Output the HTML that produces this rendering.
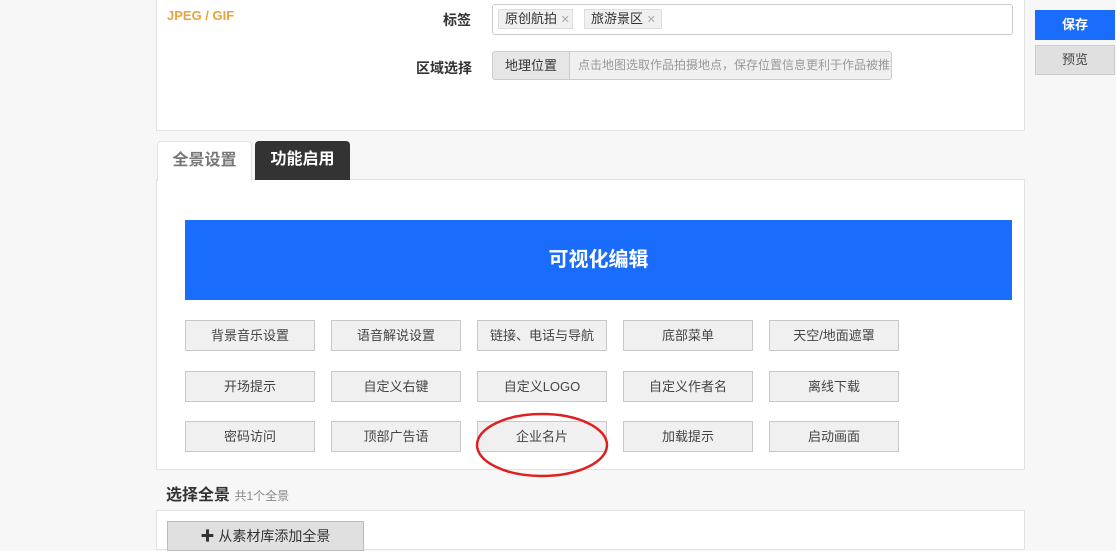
<!DOCTYPE html>
<html><head><meta charset="utf-8"><style>
*{box-sizing:border-box;margin:0;padding:0}
body{width:1116px;height:539px;overflow:hidden;background:#f7f7f7;font-family:"Liberation Sans","Noto Sans CJK SC",sans-serif;position:relative;color:#333}
.abs{position:absolute}
.panel{background:#fff;border:1px solid #e2e2e2}
.btn{position:absolute;width:130px;height:31px;background:#f0f0f0;border:1px solid #c8c8c8;font-size:13px;text-align:center;line-height:29px;color:#444}
</style></head><body>
<div class="abs panel" style="left:156px;top:-2px;width:869px;height:133px"></div>
<div class="abs" style="left:167px;top:8px;color:#e8a33c;font-weight:bold;font-size:13px">JPEG / GIF</div>
<div class="abs" style="left:443px;top:10px;font-size:14px;font-weight:bold">标签</div>
<div class="abs" style="left:492px;top:4px;width:521px;height:31px;border:1px solid #ccc;border-radius:3px;background:#fff"></div>
<div class="abs" style="left:498px;top:9px;width:75px;height:20px;background:#f0f0f0;border:1px solid #ddd;font-size:13px;line-height:18px;padding-left:6px">原创航拍 <span style="color:#aaa;font-size:11px">✕</span></div>
<div class="abs" style="left:584px;top:9px;width:78px;height:20px;background:#f0f0f0;border:1px solid #ddd;font-size:13px;line-height:18px;padding-left:6px">旅游景区 <span style="color:#aaa;font-size:11px">✕</span></div>
<div class="abs" style="left:416px;top:58px;font-size:14px;font-weight:bold">区域选择</div>
<div class="abs" style="left:492px;top:51px;width:400px;height:29px;border:1px solid #ccc;border-radius:3px;background:#f0f0f0;overflow:hidden;white-space:nowrap">
<span style="display:inline-block;width:77px;height:27px;background:#e6e6e6;border-right:1px solid #ccc;text-align:center;line-height:27px;font-size:13px;vertical-align:top">地理位置</span><span style="font-size:12px;color:#999;line-height:27px;padding-left:8px">点击地图选取作品拍摄地点，保存位置信息更利于作品被推荐</span></div>
<div class="abs" style="left:1035px;top:10px;width:80px;height:30px;background:#1a6dfc;color:#fff;font-size:13px;font-weight:bold;text-align:center;line-height:30px">保存</div>
<div class="abs" style="left:1035px;top:45px;width:80px;height:30px;background:#e0e0e0;border:1px solid #ccc;font-size:13px;text-align:center;line-height:28px;color:#444">预览</div>
<div class="abs panel" style="left:156px;top:179px;width:869px;height:291px"></div>
<div class="abs" style="left:157px;top:141px;width:95px;height:40px;background:#fff;border:1px solid #e2e2e2;border-bottom:none;border-radius:4px 4px 0 0;font-size:16px;color:#777;text-align:center;line-height:38px;font-weight:bold">全景设置</div>
<div class="abs" style="left:255px;top:141px;width:95px;height:39px;background:#333;border-radius:4px 4px 0 0;font-size:16px;color:#fff;text-align:center;line-height:38px;font-weight:bold">功能启用</div>
<div class="abs" style="left:185px;top:220px;width:827px;height:80px;background:#1a6dfc;color:#fff;font-size:20px;font-weight:bold;text-align:center;line-height:80px">可视化编辑</div>
<div class="btn" style="left:185px;top:320px">背景音乐设置</div>
<div class="btn" style="left:331px;top:320px">语音解说设置</div>
<div class="btn" style="left:477px;top:320px">链接、电话与导航</div>
<div class="btn" style="left:623px;top:320px">底部菜单</div>
<div class="btn" style="left:769px;top:320px">天空/地面遮罩</div>
<div class="btn" style="left:185px;top:371px">开场提示</div>
<div class="btn" style="left:331px;top:371px">自定义右键</div>
<div class="btn" style="left:477px;top:371px">自定义LOGO</div>
<div class="btn" style="left:623px;top:371px">自定义作者名</div>
<div class="btn" style="left:769px;top:371px">离线下载</div>
<div class="btn" style="left:185px;top:421px">密码访问</div>
<div class="btn" style="left:331px;top:421px">顶部广告语</div>
<div class="btn" style="left:477px;top:421px">企业名片</div>
<div class="btn" style="left:623px;top:421px">加载提示</div>
<div class="btn" style="left:769px;top:421px">启动画面</div>
<svg class="abs" style="left:0;top:0" width="1116" height="539"><ellipse cx="542" cy="445" rx="65" ry="31" fill="none" stroke="#e02020" stroke-width="2.5"/></svg>
<div class="abs" style="left:166px;top:481px;font-size:16px;font-weight:bold">选择全景 <span style="font-size:12px;color:#888;font-weight:normal">共1个全景</span></div>
<div class="abs panel" style="left:156px;top:510px;width:869px;height:40px"></div>
<div class="abs" style="left:167px;top:521px;width:197px;height:30px;background:#e0e0e0;border:1px solid #bbb;font-size:14px;text-align:center;line-height:28px"><b>✚</b> 从素材库添加全景</div>
</body></html>
